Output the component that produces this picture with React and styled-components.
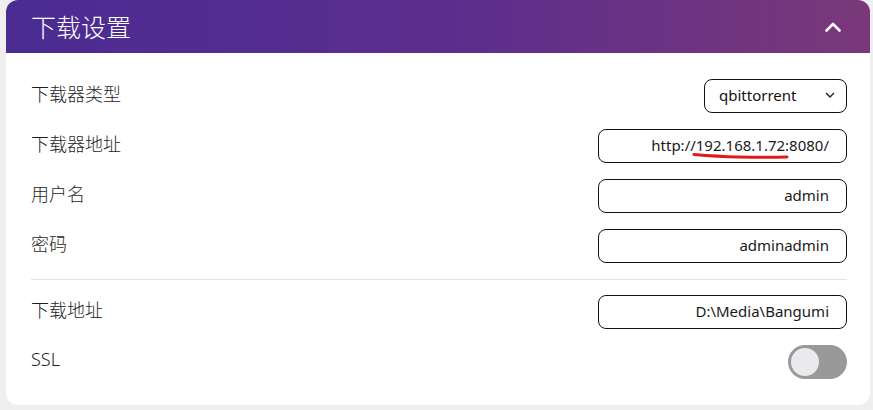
import React from "react";
import styled, { createGlobalStyle } from "styled-components";

const Global = createGlobalStyle`
  html, body { margin: 0; padding: 0; background: #efefef; }
  body { font-family: "Segoe UI", "Noto Sans", "Noto Sans CJK SC", sans-serif; }
  * { box-sizing: border-box; }
`;

const Page = styled.div`
  width: 873px;
  height: 410px;
  padding: 0 3px 5px 6px;
  overflow: hidden;
`;

const Card = styled.section`
  background: #fff;
  border-radius: 12px;
  overflow: hidden;
  height: 405px;
  display: flex;
  flex-direction: column;
`;

const Header = styled.header`
  height: 53px;
  flex: none;
  display: flex;
  align-items: center;
  justify-content: space-between;
  padding: 0 29px 0 25px;
  background: linear-gradient(90deg, #4a2c92 0%, #5b2d8e 50%, #7a3879 100%);
`;

const Title = styled.h2`
  margin: 0;
  color: #fff;
  font-size: 25px;
  font-weight: 300;
  font-family: "Noto Sans CJK SC", sans-serif;
  line-height: 1;
`;

const Body = styled.div`
  padding: 26px 23px 26px 25px;
  display: flex;
  flex-direction: column;
  gap: 16px;
`;

const Row = styled.div`
  height: 34px;
  display: flex;
  align-items: center;
  justify-content: space-between;
`;

const Label = styled.span`
  font-size: 18px;
  font-weight: 300;
  color: #1e1e1e;
  font-family: ${(p) => (p.latin ? '"Segoe UI", "Noto Sans", sans-serif' : '"Noto Sans CJK SC", sans-serif')};
  margin-bottom: 7px;
  line-height: 1;
`;

const Divider = styled.hr`
  margin: 0 0 -1px;
  border: none;
  border-top: 1px solid #e3e3ec;
  height: 0;
`;

const FieldWrap = styled.div`
  position: relative;
  width: ${(p) => p.w}px;
  height: 34px;
`;

const TextInput = styled.input`
  width: 100%;
  height: 100%;
  border: 1px solid #111;
  border-radius: 8px;
  padding: 0 17px 2px 12px;
  text-align: right;
  font-family: "Segoe UI", "Noto Sans", sans-serif;
  font-size: 15px;
  color: #1a1a1a;
  background: #fff;
  outline: none;
`;

const Select = styled.div`
  width: 143px;
  height: 34px;
  border: 1px solid #111;
  border-radius: 8px;
  display: flex;
  align-items: center;
  justify-content: space-between;
  padding: 0 11px 2px 14px;
  font-family: "Segoe UI", "Noto Sans", sans-serif;
  font-size: 15px;
  color: #111;
`;

const Mark = styled.svg`
  position: absolute;
  left: 0;
  top: 0;
  pointer-events: none;
`;

const Toggle = styled.div`
  width: 59px;
  height: 34px;
  border-radius: 17px;
  background: #999;
  display: flex;
  align-items: center;
  padding: 0 3px;
`;

const Knob = styled.div`
  width: 28px;
  height: 28px;
  border-radius: 50%;
  background: #e9e9ee;
`;

export default function App() {
  return (
    <Page>
      <Global />
      <Card>
        <Header>
          <Title>下载设置</Title>
          <svg width="16" height="10" viewBox="0 0 16 10">
            <path d="M1.5 8.5 L8 2 L14.5 8.5" fill="none" stroke="#fff" strokeWidth="2.6" strokeLinecap="round" strokeLinejoin="round" />
          </svg>
        </Header>
        <Body>
          <Row>
            <Label>下载器类型</Label>
            <Select>
              <span>qbittorrent</span>
              <svg width="10" height="6" viewBox="0 0 10 6">
                <path d="M1 1 L5 5 L9 1" fill="none" stroke="#222" strokeWidth="1.4" />
              </svg>
            </Select>
          </Row>
          <Row>
            <Label>下载器地址</Label>
            <FieldWrap w={249}>
              <TextInput readOnly value="http://192.168.1.72:8080/" />
              <Mark width="249" height="34" viewBox="0 0 249 34">
                <path d="M96 25.5 Q120 27.5 140 28 Q170 28.5 189 28" fill="none" stroke="#e01b1b" strokeWidth="3" strokeLinecap="round" />
              </Mark>
            </FieldWrap>
          </Row>
          <Row>
            <Label>用户名</Label>
            <FieldWrap w={249}>
              <TextInput readOnly value="admin" />
            </FieldWrap>
          </Row>
          <Row>
            <Label>密码</Label>
            <FieldWrap w={249}>
              <TextInput readOnly value="adminadmin" />
            </FieldWrap>
          </Row>
          <Divider />
          <Row>
            <Label>下载地址</Label>
            <FieldWrap w={249}>
              <TextInput readOnly value="D:\Media\Bangumi" />
            </FieldWrap>
          </Row>
          <Row>
            <Label latin>SSL</Label>
            <Toggle>
              <Knob />
            </Toggle>
          </Row>
        </Body>
      </Card>
    </Page>
  );
}
